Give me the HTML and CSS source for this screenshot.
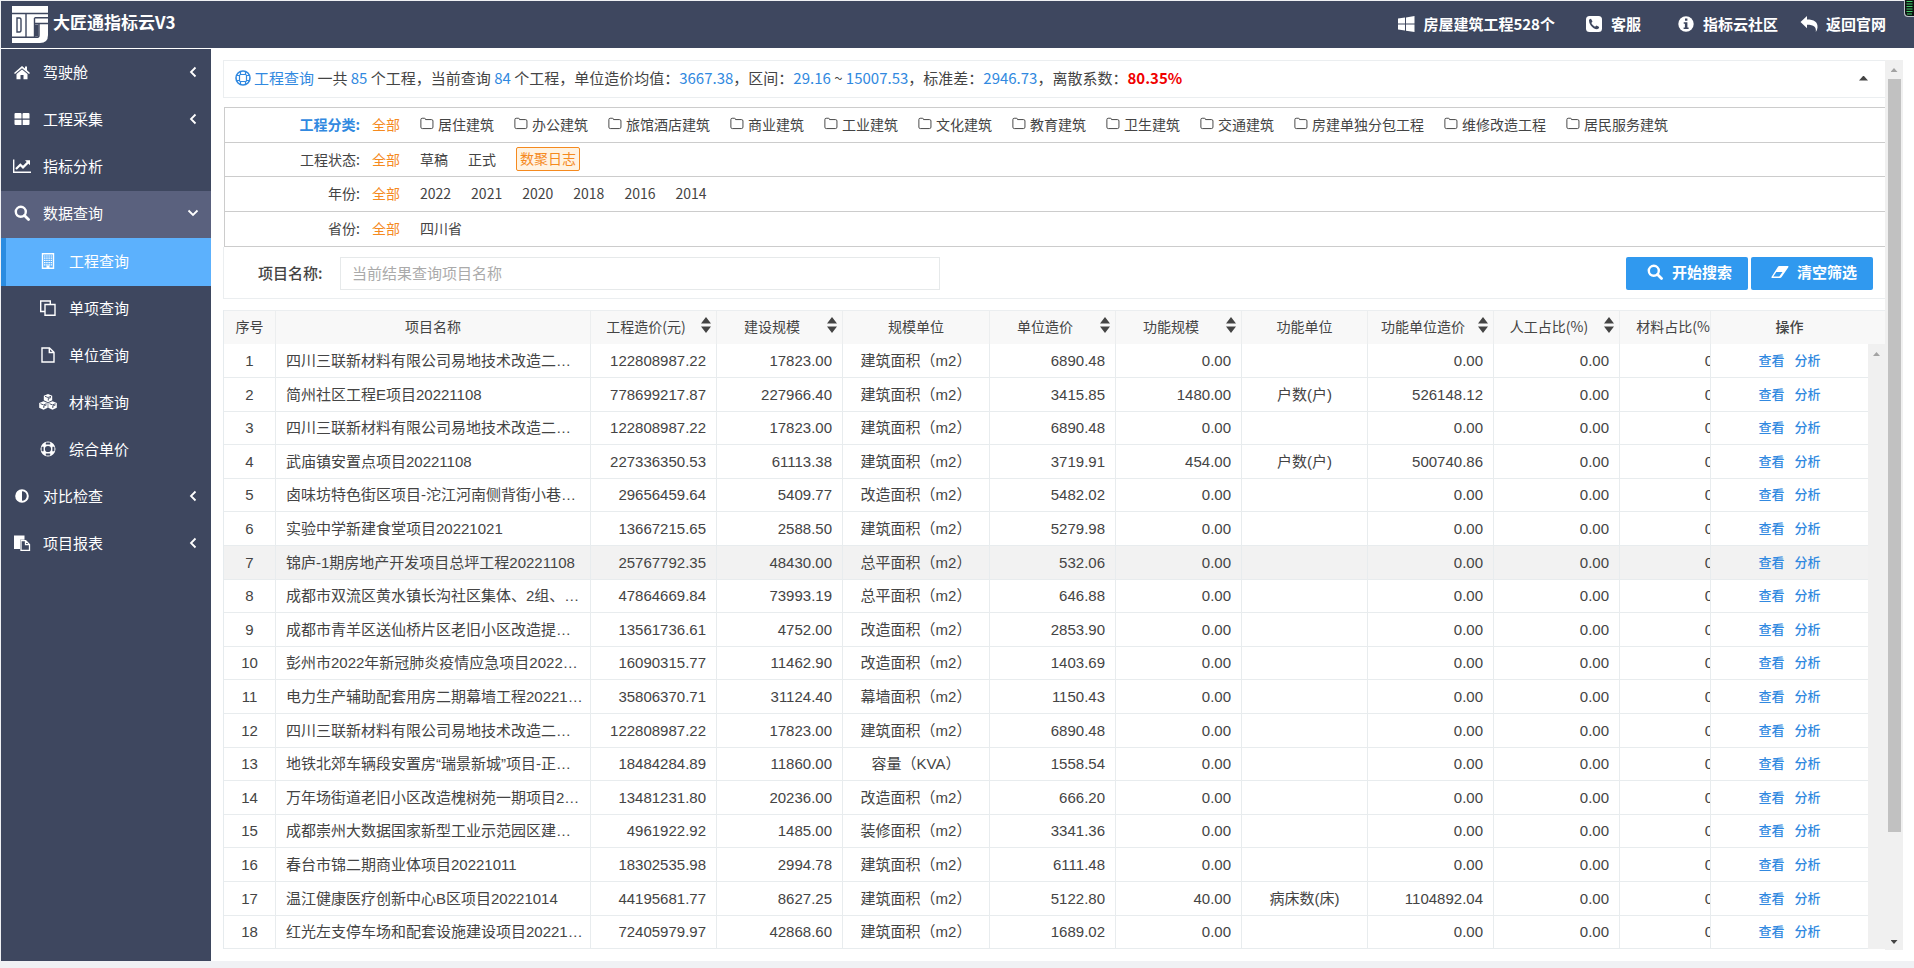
FILE: index.html
```html
<!DOCTYPE html>
<html lang="zh-CN">
<head>
<meta charset="utf-8">
<title>大匠通指标云V3</title>
<link rel="stylesheet" href="styles.css">
</head>
<body>
<svg class="sprite" aria-hidden="true">
  <symbol id="i-folder" viewBox="0 0 16 14"><path d="M1 2.5Q1 1 2.500 1H5q1.300 0 1.300 1.500h6.700q1.800 0 1.800 1.600v7q0 1.700-1.800 1.700H2.700Q1 12.800 1 11.200z" fill="none" stroke="currentColor" stroke-width="1.100"/></symbol>
  <symbol id="i-search" viewBox="0 0 16 16"><circle cx="6.800" cy="6.800" r="5" fill="none" stroke="currentColor" stroke-width="2.400"/><path d="M10.500 10.500l4 4" stroke="currentColor" stroke-width="2.800" stroke-linecap="round"/></symbol>
  <symbol id="i-left" viewBox="0 0 8 12"><path d="M6.500 1.500L2 6l4.500 4.500" fill="none" stroke="currentColor" stroke-width="1.800"/></symbol>
  <symbol id="i-down" viewBox="0 0 12 8"><path d="M1.500 1.500L6 6l4.500-4.500" fill="none" stroke="currentColor" stroke-width="1.800"/></symbol>
  <symbol id="i-sort" viewBox="0 0 10 16"><path d="M5 0l5 6.500H0zM0 9.500h10L5 16z" fill="currentColor"/></symbol>
</svg>

<header class="topbar">
  <a class="brand" href="#">
    <svg class="brand-logo" viewBox="0 0 36 37"><path d="M0 0h36v29q0 8-8 8H0z" fill="#fff"/><path d="M0 7.500h36M14 7.500V31M22.500 12v19M22.500 11.800H36M22.500 17.500H36M0 31.300h25.500q1.500 0 1.500-2V17.500" fill="none" stroke="#3e475f" stroke-width="1.400"/><path d="M23 18.500h3.500v12H23z" fill="#3e475f"/><path d="M5 12h2.500q1.500 0 1.500 2v10q0 2-1.500 2H5z" fill="#fff" stroke="#3e475f" stroke-width="1.400"/></svg>
    <h1 class="brand-name">大匠通指标云V3</h1>
  </a>
  <nav class="toplinks">
    <a class="toplink toplink-count" href="#"><svg class="icon-top" viewBox="0 0 18 18"><path d="M1 3.600L8 2.600v6H1zM9 2.400L17.500 1v7.600H9zM1 9.500h7v6L1 14.500zM9 9.500h8.500V17L9 15.700z" fill="currentColor"/></svg>房屋建筑工程528个</a>
    <a class="toplink toplink-service" href="#"><svg class="icon-top" viewBox="0 0 18 18"><rect x="1" y="1" width="16" height="16" rx="3.500" fill="currentColor"/><path d="M4 5.500C4 4.500 5 3.800 6 3.800L7.500 6.500 6.300 8q1.200 2.600 3.700 3.700l1.500-1.300 2.700 1.500q0 2-2.200 2.300Q8.500 14.200 5.800 10.500 4 8 4 5.500z" fill="#3e475f"/></svg>客服</a>
    <a class="toplink" href="#"><svg class="icon-top" viewBox="0 0 18 18"><circle cx="9" cy="9" r="7.700" fill="currentColor"/><path d="M8 3.500h2.400v2.300H8zM6.700 7.200h3.700v5.200h1.200v1.500h-5v-1.500h1.300V8.700H6.700z" fill="#3e475f"/></svg>指标云社区</a>
    <a class="toplink" href="#"><svg class="icon-top" viewBox="0 0 18 18"><path d="M7 1v3.500c7 0 11 2.500 10.500 8q-.2 2.500-1.700 4.500C16.500 12 14 9.800 7 9.800v3.400L.5 7z" fill="currentColor"/></svg>返回官网</a>
  </nav>
  <svg class="meter" viewBox="0 0 10 17" aria-hidden="true"><path d="M0 0h10v17H4Q0 17 0 13z" fill="#bfc5cc"/><path d="M1 0h9v16H4.500Q1 16 1 12.500z" fill="#0b1410"/><path d="M2.500 1.500h6M2.500 4h6M2.500 6.500h6M2.500 9h6M2.500 11.500h6M3 14h5" stroke="#42c96b" stroke-width="1.200"/></svg>
</header>

<div class="layout">
  <nav class="sidebar">
    <a class="menu" href="#"><svg class="icon-menu" viewBox="0 0 18 16"><path d="M9 2L1 9l1 1.100L9 4.200l7 5.900L17 9l-3-2.700V2.500h-2v2zM9 5.400L3.500 10v5.200h4V11h3v4.200h4V10z" fill="currentColor"/></svg><span class="menu-text">驾驶舱</span><svg class="chevron"><use href="#i-left"/></svg></a>
    <a class="menu" href="#"><svg class="icon-menu" viewBox="0 0 18 16"><path d="M2.500 2h5q1 0 1 1v4.500h-7V3q0-1 1-1zM10.500 2h5q1 0 1 1v4.500h-7V3q0-1 1-1zM1.500 8.800h7V14h-6q-1 0-1-1zM9.700 8.800h6.800V13q0 1-1 1H9.700z" fill="currentColor"/></svg><span class="menu-text">工程采集</span><svg class="chevron"><use href="#i-left"/></svg></a>
    <a class="menu" href="#"><svg class="icon-menu" viewBox="0 0 18 16"><path d="M.7 1.500v12.800H18" fill="none" stroke="currentColor" stroke-width="1.400"/><path d="M3 11l4.300-4.300L10 9.400l5-5" fill="none" stroke="currentColor" stroke-width="2.200"/><path d="M12 2.200h5v5z" fill="currentColor"/></svg><span class="menu-text">指标分析</span></a>
    <a class="menu menu-open" href="#"><svg class="icon-menu"><use href="#i-search"/></svg><span class="menu-text">数据查询</span><svg class="chevron chevron-down"><use href="#i-down"/></svg></a>
    <a class="menu submenu submenu-active" href="#"><svg class="icon-menu" viewBox="0 0 18 16"><path d="M3.500.7h11v14.600h-11z" fill="none" stroke="currentColor" stroke-width="1.400"/><path d="M5 3h8.500M5 5.200h8.500M5 7.400h8.500M5 9.600h8.500M5 11.800h8.500" stroke="currentColor" stroke-width="1.200" stroke-dasharray="1.500 .700"/><path d="M7.500 12.500h3V15h-3z" fill="currentColor"/></svg><span class="menu-text">工程查询</span></a>
    <a class="menu submenu" href="#"><svg class="icon-menu" viewBox="0 0 18 16"><path d="M6 4.500h10v10.800H6z" fill="none" stroke="currentColor" stroke-width="1.400"/><path d="M6 11.500H1.700V1h9.600v3.500" fill="none" stroke="currentColor" stroke-width="1.400"/></svg><span class="menu-text">单项查询</span></a>
    <a class="menu submenu" href="#"><svg class="icon-menu" viewBox="0 0 18 16"><path d="M3 1h7.500L15 5.200V15H3zM10.300 1v4.500H15" fill="none" stroke="currentColor" stroke-width="1.400"/></svg><span class="menu-text">单位查询</span></a>
    <a class="menu submenu" href="#"><svg class="icon-menu" viewBox="0 0 18 16"><path d="M9 0l4.200 1.700v4.600L9 8.200 4.800 6.300V1.700zM4.500 7.300l4.200 1.800v4.700l-4.200 2-4.300-2V9.100zM13.500 7.300l4.300 1.800v4.700l-4.300 2-4.200-2V9.100z" fill="currentColor"/><path d="M6 2.300l3 1.200 3-1.200M9.300 6.500V4.500l2.700-1M1.500 9.700l3 1.200 3-1.200M4.800 14v-2l2.700-1.100M10.500 9.700l3 1.200 3-1.200M13.800 14v-2l2.700-1.100" fill="none" stroke="#3e475f" stroke-width=".9"/></svg><span class="menu-text">材料查询</span></a>
    <a class="menu submenu" href="#"><svg class="icon-menu" viewBox="0 0 18 16"><circle cx="9" cy="8" r="5.300" fill="none" stroke="currentColor" stroke-width="4.400"/><path d="M6.800 2.600h4.400M6.800 13.400h4.400M3.600 5.800v4.400M14.400 5.800v4.400" stroke="#3e475f" stroke-width="2"/></svg><span class="menu-text">综合单价</span></a>
    <a class="menu" href="#"><svg class="icon-menu" viewBox="0 0 18 16"><circle cx="9" cy="8" r="5.800" fill="none" stroke="currentColor" stroke-width="2"/><path d="M9 2v12A6 6 0 0 1 9 2z" fill="currentColor"/></svg><span class="menu-text">对比检查</span><svg class="chevron"><use href="#i-left"/></svg></a>
    <a class="menu" href="#"><svg class="icon-menu" viewBox="0 0 18 16"><path d="M1 .5h10.500v4.200H7v9.300H1z" fill="currentColor"/><path d="M8 5.700h4.700l3.800 3.700v6H8zM12.500 5.700v3.900h4" fill="none" stroke="currentColor" stroke-width="1.300"/></svg><span class="menu-text">项目报表</span><svg class="chevron"><use href="#i-left"/></svg></a>
  </nav>

  <main class="content">
    <div class="pane">
      <section class="summary">
        <svg class="icon-title" viewBox="0 0 16 16"><circle cx="8" cy="8" r="7" fill="none" stroke="currentColor" stroke-width="1.600"/><path d="M5.500 4.500h5q1 0 1 1v5q0 1-1 1h-5q-1 0-1-1v-5q0-1 1-1zM5.500 1.500v3M10.500 1.500v3M5.500 11.500v3M10.500 11.500v3M1.500 5.500h3M1.500 10.500h3M11.500 5.500h3M11.500 10.500h3" fill="none" stroke="currentColor" stroke-width="1.200"/></svg>
        <p class="summary-text"><b class="blue">工程查询</b> 一共 <b class="blue">85</b> 个工程，当前查询 <b class="blue">84</b> 个工程，单位造价均值：<b class="blue">3667.38</b>，区间：<b class="blue">29.16</b> ~ <b class="blue">15007.53</b>，标准差：<b class="blue">2946.73</b>，离散系数：<strong class="red">80.35%</strong></p>
        <button class="fold" type="button" aria-label="收起"></button>
      </section>

      <section class="filters">
        <div class="filter"><span class="filter-label filter-label-main">工程分类:</span><div class="filter-items" id="categories"><a class="chosen" href="#">全部</a></div></div>
        <div class="filter filter-status"><span class="filter-label">工程状态:</span><div class="filter-items"><a class="chosen" href="#">全部</a><a href="#">草稿</a><a href="#">正式</a><a class="tag" href="#">数聚日志</a></div></div>
        <div class="filter"><span class="filter-label">年份:</span><div class="filter-items"><a class="chosen" href="#">全部</a><a href="#">2022</a><a href="#">2021</a><a href="#">2020</a><a href="#">2018</a><a href="#">2016</a><a href="#">2014</a></div></div>
        <div class="filter"><span class="filter-label">省份:</span><div class="filter-items"><a class="chosen" href="#">全部</a><a href="#">四川省</a></div></div>
      </section>

      <form class="search">
        <label class="search-label" for="project">项目名称:</label>
        <input class="search-input" id="project" type="text" placeholder="当前结果查询项目名称">
        <div class="search-actions">
          <button class="btn" type="button"><svg class="icon-btn"><use href="#i-search"/></svg>开始搜索</button>
          <button class="btn" type="button"><svg class="icon-btn" viewBox="0 0 18 16"><path d="M8.200 2H17q.8.200.3 1.200l-6.500 9.600q-.8 1.200-2 1.200H1Q0 13.700.6 12.700L6.800 3Q7.400 2 8.200 2zM2.300 12.600h6L11.500 8H5.300z" fill="currentColor" fill-rule="evenodd"/></svg>清空筛选</button>
        </div>
      </form>

      <section class="grid">
        <div class="grid-head">
          <table class="cols">
            <colgroup><col class="c-no"><col><col class="c-num"><col class="c-num"><col class="c-unit"><col class="c-num"><col class="c-num"><col class="c-num"><col class="c-num"><col class="c-num"><col class="c-clip"><col class="c-ops"></colgroup>
            <thead><tr id="head"></tr></thead>
          </table>
          <div class="grid-gap"></div>
        </div>
        <div class="grid-body">
          <table class="cols">
            <colgroup><col class="c-no"><col><col class="c-num"><col class="c-num"><col class="c-unit"><col class="c-num"><col class="c-num"><col class="c-num"><col class="c-num"><col class="c-num"><col class="c-clip"><col class="c-ops"></colgroup>
            <tbody id="rows"></tbody>
          </table>
          <div class="bar bar-inner"><span class="arrow arrow-up"></span></div>
        </div>
      </section>
    </div>
    <div class="bar bar-outer"><span class="arrow arrow-up"></span><span class="thumb"></span><span class="arrow arrow-down"></span></div>
  </main>
</div>
<script src="script.js"></script>
</body>
</html>
```
FILE: styles.css
```css
* { box-sizing: border-box; }

body {
  margin: 0;
  height: 100vh;
  display: flex;
  flex-direction: column;
  padding: 1px 0 7px 1px;
  background: #f0f1f4;
  color: #444;
  font: 14px/20px "Noto Sans CJK SC", sans-serif;
}

a { color: inherit; text-decoration: none; }
.sprite { position: absolute; width: 0; height: 0; }

.topbar {
  position: relative;
  flex: none;
  height: 47px;
  display: flex;
  align-items: center;
  justify-content: space-between;
  padding: 0 28px 2px 11px;
  background: #3e475f;
  color: #fff;
}
.brand { display: flex; gap: 5px; align-items: center; padding-top: 2px; }
.brand-logo { width: 36px; height: 37px; }
.brand-name { margin: 0 0 6px; font-size: 17px; line-height: 24px; }
.toplinks { display: flex; gap: 22px; font-size: 15px; font-weight: bold; }
.toplink { display: flex; align-items: center; gap: 8px; }
.toplink-count { margin-right: 8px; }
.toplink-service { margin-right: 14px; }
.icon-top { width: 18px; height: 18px; }
.meter { position: absolute; top: -1px; right: 0; width: 10px; height: 17px; }

.layout { flex: 1; min-height: 0; display: flex; padding-top: 1px; background: #fff; }

.sidebar { flex: none; width: 210px; padding-top: 1px; background: #3e475f; color: #fff; font-size: 15px; }
.menu { height: 47px; display: flex; align-items: center; gap: 12px; padding: 0 12px 3px; }
.menu-text { flex: 1; }
.menu-open { background: #5a617e; }
.submenu { padding-left: 38px; }
.submenu-active { height: 48px; background: #5cb1fd; border-left: 5px solid #2b8ce0; padding-left: 33px; }
.icon-menu { flex: none; width: 18px; height: 16px; }
.chevron { width: 12px; height: 12px; }
.chevron-down { height: 8px; }

.content { flex: 1; min-width: 0; display: flex; align-items: flex-start; padding: 11px 11px 11px 12px; }
.pane { flex: 1; min-width: 0; }

.summary {
  height: 38px;
  display: flex;
  align-items: center;
  gap: 3px;
  padding: 0 17px 2px 11px;
  border: 1px solid #ebeef0;
  border-right: 0;
  font-size: 15px;
}
.summary-text { flex: 1; margin: 0; }
.icon-title { width: 16px; height: 16px; color: #3189e0; }
.blue { color: #3189e0; font-weight: normal; }
.red { color: #f00000; }
.fold {
  width: 9px;
  height: 5px;
  padding: 0;
  border: 0;
  background: #444;
  clip-path: polygon(50% 0, 100% 100%, 0 100%);
}

.filters { margin: 9px 0 0 1px; border: 1px solid #ccc; border-width: 1px 0 0 1px; }
.filter { height: 35px; display: flex; align-items: center; gap: 12px; padding-bottom: 3px; border-bottom: 1px solid #ccc; }
.filter-status { height: 34px; padding-bottom: 1px; }
.filter-label { width: 135px; text-align: right; }
.filter-label-main { color: #3189e0; font-weight: bold; }
.filter-items { display: flex; align-items: center; gap: 20px; }
.chosen { color: #f58a1f; }
.tag { padding: 0 3px 2px; border: 1px solid #f58a1f; border-radius: 2px; background: #fff3e2; color: #f58a1f; line-height: 20px; }
.category { display: flex; align-items: center; gap: 4px; }
.icon-folder { width: 14px; height: 13px; }

.search {
  height: 52px;
  display: flex;
  align-items: center;
  padding: 1px 12px 0 34px;
  border: 1px solid #ebeef0;
  border-width: 0 0 1px 1px;
  font-size: 15px;
}
.search-label { width: 82px; font-weight: 500; }
.search-input {
  width: 600px;
  height: 33px;
  padding: 0 11px 2px;
  border: 1px solid #e6e9ea;
  color: #444;
  font: inherit;
}
.search-input::placeholder { color: #aaa; opacity: 1; }
.search-actions { margin-left: auto; display: flex; gap: 3px; }
.btn {
  width: 122px;
  height: 33px;
  display: flex;
  align-items: center;
  justify-content: flex-end;
  gap: 8px;
  padding: 0 16px 2px;
  border: 0;
  border-radius: 2px;
  background: #3099ef;
  color: #fff;
  font: bold 15px/20px "Noto Sans CJK SC", sans-serif;
}
.icon-btn { width: 18px; height: 16px; }

.grid { margin-top: 11px; border-left: 1px solid #e6ebee; }
.grid-head, .grid-body { display: flex; }
.grid-head { border-top: 1px solid #ebeef0; background: #f8f8f8; }
.grid-gap { flex: none; width: 17px; }
.cols { flex: 1; width: 100%; min-width: 0; table-layout: fixed; border-collapse: separate; border-spacing: 0; }
.c-no { width: 52px; }
.c-num { width: 126px; }
.c-unit { width: 147px; }
.c-clip { width: 91px; }
.c-ops { width: 157px; }
.cols th { height: 33px; padding: 0 0 3px; border-right: 1px solid #eceeef; font-weight: normal; }
.cols th:last-child { border-right: 0; font-weight: 500; }
.th { display: flex; align-items: center; justify-content: center; }
.th-text { flex: 1; text-align: center; white-space: nowrap; }
.sort { flex: none; width: 10px; height: 16px; margin: 0 5px 2px 0; padding: 0; border: 0; background: none; color: #444; }
.sort svg { display: block; width: 10px; height: 16px; }

.cols td {
  height: 34px;
  padding: 0 10px;
  border: 1px solid #e8ecee;
  border-width: 0 1px 1px 0;
  font: 15px/20px "Liberation Sans", "Noto Sans CJK SC", sans-serif;
  white-space: nowrap;
}
.cols tr:nth-child(5n) td, .cols tr:nth-child(5n+3) td { height: 33px; }
.cols tr:nth-child(7) td { background: #f2f2f2; }
.cols .center { text-align: center; }
.cols .right { text-align: right; }
.cols .clip { overflow: hidden; padding-left: 0; padding-right: 0; }
.clip-inner { width: 126px; }
td .clip-inner { padding-right: 12px; text-align: right; }
.cols .ops { border-right: 0; text-align: center; font-size: 13px; font-weight: 500; color: #3189e0; }
.ops a + a { margin-left: 10px; }

.bar { flex: none; display: flex; flex-direction: column; align-items: center; background: #f0f0f0; }
.bar-inner { width: 17px; padding-top: 8px; }
.bar-outer { align-self: stretch; width: 18px; padding: 8px 0 6px; gap: 7px; }
.arrow { flex: none; width: 7px; height: 4px; background: #a3a3a3; clip-path: polygon(50% 0, 100% 100%, 0 100%); }
.arrow-down { margin-top: auto; background: #444; clip-path: polygon(0 0, 100% 0, 50% 100%); }
.thumb { width: 13px; height: 86%; background: #c1c1c1; }
```
FILE: script.js
```js
const categories = ['居住建筑', '办公建筑', '旅馆酒店建筑', '商业建筑', '工业建筑', '文化建筑', '教育建筑', '卫生建筑', '交通建筑', '房建单独分包工程', '维修改造工程', '居民服务建筑'];
document.getElementById('categories').insertAdjacentHTML('beforeend', categories.map(c =>
  `<a class="category" href="#"><svg class="icon-folder"><use href="#i-folder"/></svg>${c}</a>`).join(''));

// A trailing * marks a sortable column.
const heads = ['序号', '项目名称', '工程造价(元)*', '建设规模*', '规模单位', '单位造价*', '功能规模*', '功能单位', '功能单位造价*', '人工占比(%)*', '材料占比(%)*', '操作'];
document.getElementById('head').innerHTML = heads.map((h, i) => {
  const sort = h.endsWith('*')
    ? '<button class="sort" type="button" aria-label="排序"><svg><use href="#i-sort"/></svg></button>' : '';
  const inner = `<div class="th${i === 10 ? ' clip-inner' : ''}"><span class="th-text">${h.replace('*', '')}</span>${sort}</div>`;
  return `<th${i === 10 ? ' class="clip"' : ''}>${inner}</th>`;
}).join('');

// name | cost | scale | scale unit | unit cost | function scale | function unit | function unit cost
const data = `四川三联新材料有限公司易地技术改造二…|122808987.22|17823.00|建筑面积（m2）|6890.48
简州社区工程E项目20221108|778699217.87|227966.40|建筑面积（m2）|3415.85|1480.00|户数(户)|526148.12
四川三联新材料有限公司易地技术改造二…|122808987.22|17823.00|建筑面积（m2）|6890.48
武庙镇安置点项目20221108|227336350.53|61113.38|建筑面积（m2）|3719.91|454.00|户数(户)|500740.86
卤味坊特色街区项目-沱江河南侧背街小巷…|29656459.64|5409.77|改造面积（m2）|5482.02
实验中学新建食堂项目20221021|13667215.65|2588.50|建筑面积（m2）|5279.98
锦庐-1期房地产开发项目总坪工程20221108|25767792.35|48430.00|总平面积（m2）|532.06
成都市双流区黄水镇长沟社区集体、2组、…|47864669.84|73993.19|总平面积（m2）|646.88
成都市青羊区送仙桥片区老旧小区改造提…|13561736.61|4752.00|改造面积（m2）|2853.90
彭州市2022年新冠肺炎疫情应急项目2022…|16090315.77|11462.90|改造面积（m2）|1403.69
电力生产辅助配套用房二期幕墙工程20221…|35806370.71|31124.40|幕墙面积（m2）|1150.43
四川三联新材料有限公司易地技术改造二…|122808987.22|17823.00|建筑面积（m2）|6890.48
地铁北郊车辆段安置房“瑞景新城”项目-正…|18484284.89|11860.00|容量（KVA）|1558.54
万年场街道老旧小区改造槐树苑一期项目2…|13481231.80|20236.00|改造面积（m2）|666.20
成都崇州大数据国家新型工业示范园区建…|4961922.92|1485.00|装修面积（m2）|3341.36
春台市锦二期商业体项目20221011|18302535.98|2994.78|建筑面积（m2）|6111.48
温江健康医疗创新中心B区项目20221014|44195681.77|8627.25|建筑面积（m2）|5122.80|40.00|病床数(床)|1104892.04
红光左支停车场和配套设施建设项目20221…|72405979.97|42868.60|建筑面积（m2）|1689.02`;

document.getElementById('rows').innerHTML = data.split('\n').map((line, i) => {
  const [name, cost, scale, unit, price, fScale = '0.00', fUnit = '', fPrice = '0.00'] = line.split('|');
  const num = v => `<td class="right">${v}</td>`;
  return `<tr><td class="center">${i + 1}</td><td>${name}</td>${num(cost)}${num(scale)}<td class="center">${unit}</td>` +
    `${num(price)}${num(fScale)}<td class="center">${fUnit}</td>${num(fPrice)}${num('0.00')}` +
    `<td class="clip"><div class="clip-inner">0.00</div></td>` +
    `<td class="ops"><a href="#">查看</a><a href="#">分析</a></td></tr>`;
}).join('');
```
